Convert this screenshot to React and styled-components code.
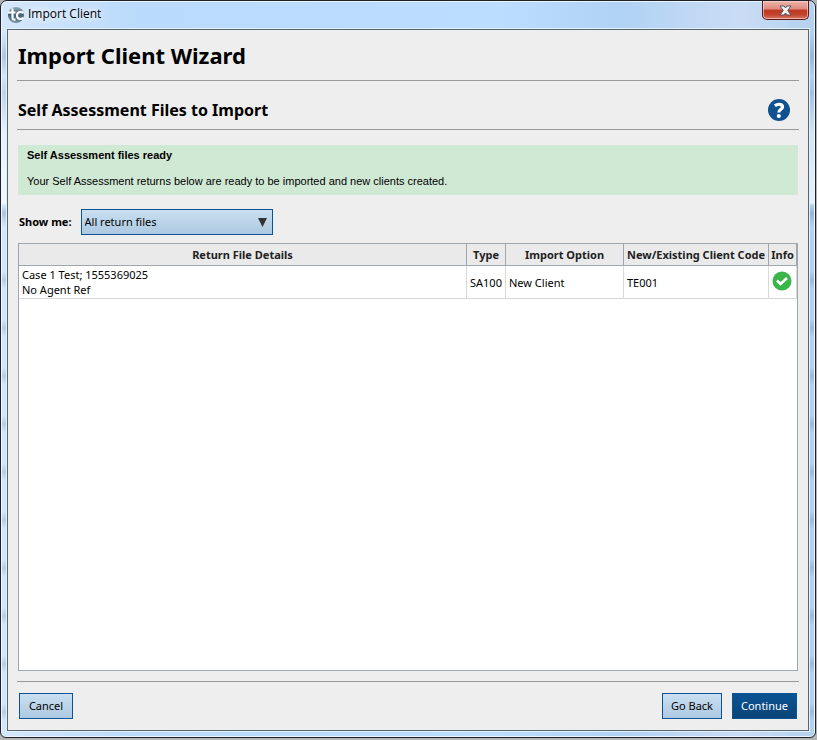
import React from 'react';
import styled, { createGlobalStyle } from 'styled-components';

const GlobalStyle = createGlobalStyle`
  * {
    box-sizing: border-box;
  }

  body {
    margin: 0;
    background: #b4b4b4;
    color: #000000;
    font-family: 'Noto Sans', 'Open Sans', sans-serif;
    font-size: 11px;
  }

  button,
  select {
    font: inherit;
    color: inherit;
    border-radius: 0;
    margin: 0;
  }
`;

const Page = styled.div`
  display: flex;
  min-height: 100vh;
  padding: 0 1px 2px 0;
`;

/* Aero glass frame round the dialog */
const WindowFrame = styled.div`
  flex: 1;
  min-width: 0;
  display: flex;
  flex-direction: column;
  padding: 0 6px 6px;
  border: 1px solid #20222b;
  border-radius: 7px 7px 6px 6px;
  background:
    linear-gradient(
      to bottom,
      transparent 0,
      transparent 32px,
      rgba(70, 100, 140, 0.25) 55px,
      transparent 75px,
      rgba(70, 100, 140, 0.15) 92px,
      rgba(255, 255, 255, 0.4) 130px,
      rgba(255, 255, 255, 0.7) 202px,
      transparent 204px
    ),
    linear-gradient(
      to bottom,
      transparent 204px,
      rgba(60, 90, 130, 0.25) 212px,
      transparent 225px,
      transparent 100%
    ),
    repeating-linear-gradient(
      to bottom,
      transparent 0,
      transparent 30px,
      rgba(60, 90, 130, 0.2) 39px,
      transparent 48px
    ) 0 240px no-repeat,
    linear-gradient(to right, #d5e7fb 0, #b9dafb 140px, #bbddff 500px, #b0d2f4 620px, #cadcf5 740px, #b3d1ee 100%);
  box-shadow: inset 0 0 0 1px #eaf5ff;
`;

const TitleBar = styled.header`
  display: flex;
  align-items: flex-start;
  justify-content: space-between;
  height: 28px;
`;

const TitleGroup = styled.div`
  display: flex;
  align-items: center;
  gap: 4px;
  height: 28px;
  padding-left: 1px;
`;

const WindowTitle = styled.span`
  font-family: 'Open Sans', 'Noto Sans', sans-serif;
  font-size: 12px;
  line-height: 16px;
  padding-bottom: 2px;
  text-shadow: 0 0 8px #ffffff, 0 0 8px #ffffff;
`;

const CloseButton = styled.button`
  display: flex;
  align-items: center;
  justify-content: center;
  width: 47px;
  height: 19px;
  padding: 0;
  border: 1px solid #5c1a1c;
  border-top: 0;
  border-radius: 0 0 5px 5px;
  background: linear-gradient(to bottom, #edb5ab 0, #de8a7e 45%, #bd3820 50%, #c2432b 75%, #d9786a 100%);
  box-shadow: inset 0 0 0 1px rgba(255, 220, 210, 0.6);
`;

const Panel = styled.main`
  flex: 1;
  display: flex;
  flex-direction: column;
  padding: 0 9px 11px;
  border: 1px solid #566570;
  background: #eeeeee;
  box-shadow: 0 0 0 1px #e1f0fb;
`;

const Divider = styled.hr`
  width: 100%;
  margin: 0;
  border: 0;
  border-top: 1px solid #999999;
`;

const PageTitle = styled.h1`
  margin: 0;
  padding: 10px 1px;
  font-size: 22px;
  line-height: 30px;
  font-weight: 700;
`;

const SectionHeader = styled.div`
  display: flex;
  align-items: center;
  justify-content: space-between;
  height: 48px;
  padding: 10px 9px 0 1px;
`;

const SectionTitle = styled.h2`
  margin: 0;
  font-size: 16px;
  line-height: 22px;
  font-weight: 700;
`;

const HelpButton = styled.button`
  display: flex;
  padding: 0;
  border: 0;
  background: none;
`;

const Body = styled.div`
  flex: 1;
  display: flex;
  flex-direction: column;
  padding: 15px 1px 10px;
`;

const Notice = styled.section`
  height: 50px;
  padding: 3px 9px;
  background: #d0e9d4;
  font-family: 'Liberation Sans', Arial, sans-serif;
  line-height: 14px;
`;

const NoticeTitle = styled.h3`
  margin: 0 0 12px;
  font-size: 11px;
  font-weight: 700;
`;

const NoticeText = styled.p`
  margin: 0;
`;

const FilterRow = styled.div`
  display: flex;
  align-items: center;
  gap: 9px;
  padding: 14px 0 8px 1px;
`;

const FilterLabel = styled.label`
  padding-bottom: 2px;
  font-weight: 700;
`;

const SelectBox = styled.div`
  position: relative;
  width: 192px;
`;

const Select = styled.select`
  display: block;
  width: 100%;
  height: 26px;
  padding: 0 24px 2px 3px;
  appearance: none;
  border: 1px solid #0b5394;
  background: linear-gradient(to bottom, #c9dff1, #adc9e1);
`;

const SelectArrow = styled.svg`
  position: absolute;
  top: 9px;
  right: 6px;
  pointer-events: none;
`;

const TableArea = styled.div`
  flex: 1;
  border: 1px solid #9ea7ad;
  background: #ffffff;
`;

const Table = styled.table`
  width: 100%;
  table-layout: fixed;
  border-collapse: separate;
  border-spacing: 0;
`;

const Column = styled.col`
  width: ${({ $width }) => $width || 'auto'};
`;

const HeadCell = styled.th`
  height: 22px;
  padding: 0;
  border-right: 1px solid #9ea7ad;
  border-bottom: 1px solid #9ea7ad;
  background: #eaeaea;
  color: #222222;
  line-height: 15px;
  white-space: nowrap;
`;

const Cell = styled.td`
  height: 33px;
  padding: 0 3px;
  border-right: 1px solid #d9d9d9;
  border-bottom: 1px solid #d9d9d9;
  line-height: 15px;
  white-space: nowrap;
`;

const StatusIcon = styled.svg`
  display: block;
  margin-bottom: 2px;
`;

const Footer = styled.footer`
  display: flex;
  gap: 10px;
  padding: 11px 2px 0;
`;

const Button = styled.button`
  min-width: 54px;
  height: 26px;
  padding: 0 8px 2px;
  border: 1px solid #0b5394;
  color: ${({ $primary }) => ($primary ? '#ffffff' : '#000000')};
  background: ${({ $primary }) =>
    $primary
      ? 'linear-gradient(to bottom, #0b5394, #0a4478)'
      : 'linear-gradient(to bottom, #c9dff1, #adc9e1)'};

  &:first-child {
    margin-right: auto;
  }
`;

const columns = [
  { label: 'Return File Details' },
  { label: 'Type', width: '39px' },
  { label: 'Import Option', width: '118px' },
  { label: 'New/Existing Client Code', width: '145px' },
  { label: 'Info', width: '28px' },
];

const returns = [
  {
    name: 'Case 1 Test; 1555369025',
    agent: 'No Agent Ref',
    type: 'SA100',
    option: 'New Client',
    code: 'TE001',
  },
];

function AppLogo() {
  return (
    <svg width="16" height="16" viewBox="0 0 16 16" aria-hidden="true">
      <defs>
        <linearGradient id="logo" x1="0" y1="0" x2="0" y2="1">
          <stop offset="0" stopColor="#92a9b5" />
          <stop offset="0.5" stopColor="#3f5f73" />
          <stop offset="1" stopColor="#7895a4" />
        </linearGradient>
      </defs>
      <circle cx="8" cy="8" r="8" fill="url(#logo)" />
      <path d="M4.500 1.500v9c0 2 1 2.500 3 2M0 5.500h7.500" fill="none" stroke="#fff" strokeWidth="2.200" />
      <path d="M15.500 6c-3-2-6.500-.8-6.500 2.500s3.500 4.500 6.500 2.500" fill="none" stroke="#fff" strokeWidth="2.200" />
    </svg>
  );
}

function CloseIcon() {
  return (
    <svg width="13" height="11" viewBox="0 0 13 11" aria-hidden="true">
      <path
        d="M1 1h4l1.500 2L8 1h4L8.700 5.500 12 10H8L6.500 8 5 10H1l3.300-4.500z"
        fill="#f6f6f6"
        stroke="#535666"
        strokeWidth="1"
      />
    </svg>
  );
}

function HelpIcon() {
  return (
    <svg width="22" height="22" viewBox="0 0 22 22" aria-hidden="true">
      <circle cx="11" cy="11" r="11" fill="#0f528f" />
      <path
        d="M6.800 6.700Q8.800 5.400 11 5.400C13.400 5.400 14.500 6.300 14.500 7.900C14.500 10.400 10.800 10.100 10.800 13.600"
        fill="none"
        stroke="#fff"
        strokeWidth="3.200"
      />
      <circle cx="10.800" cy="17" r="2.100" fill="#fff" />
    </svg>
  );
}

function App() {
  return (
    <>
      <GlobalStyle />
      <Page>
        <WindowFrame>
          <TitleBar>
            <TitleGroup>
              <AppLogo />
              <WindowTitle>Import Client</WindowTitle>
            </TitleGroup>
            <CloseButton type="button" aria-label="Close">
              <CloseIcon />
            </CloseButton>
          </TitleBar>

          <Panel>
            <PageTitle>Import Client Wizard</PageTitle>
            <Divider />
            <SectionHeader>
              <SectionTitle>Self Assessment Files to Import</SectionTitle>
              <HelpButton type="button" aria-label="Help">
                <HelpIcon />
              </HelpButton>
            </SectionHeader>
            <Divider />

            <Body>
              <Notice>
                <NoticeTitle>Self Assessment files ready</NoticeTitle>
                <NoticeText>
                  Your Self Assessment returns below are ready to be imported and new clients created.
                </NoticeText>
              </Notice>

              <FilterRow>
                <FilterLabel htmlFor="filter">Show me:</FilterLabel>
                <SelectBox>
                  <Select id="filter" defaultValue="all">
                    <option value="all">All return files</option>
                  </Select>
                  <SelectArrow width="9" height="9" viewBox="0 0 9 9" aria-hidden="true">
                    <path d="M0 0h9L4.500 9z" fill="#333333" />
                  </SelectArrow>
                </SelectBox>
              </FilterRow>

              <TableArea>
                <Table>
                  <colgroup>
                    {columns.map((column) => (
                      <Column key={column.label} $width={column.width} />
                    ))}
                  </colgroup>
                  <thead>
                    <tr>
                      {columns.map((column) => (
                        <HeadCell key={column.label} scope="col">
                          {column.label}
                        </HeadCell>
                      ))}
                    </tr>
                  </thead>
                  <tbody>
                    {returns.map((item) => (
                      <tr key={item.name}>
                        <Cell>
                          {item.name}
                          <br />
                          {item.agent}
                        </Cell>
                        <Cell>{item.type}</Cell>
                        <Cell>{item.option}</Cell>
                        <Cell>{item.code}</Cell>
                        <Cell>
                          <StatusIcon width="20" height="20" viewBox="0 0 20 20" role="img" aria-label="Ready">
                            <circle cx="10" cy="10" r="9.500" fill="#39b54a" />
                            <path d="M5 9.500l3.500 3.500 6.500-6" fill="none" stroke="#fff" strokeWidth="2.600" />
                          </StatusIcon>
                        </Cell>
                      </tr>
                    ))}
                  </tbody>
                </Table>
              </TableArea>
            </Body>

            <Divider />
            <Footer>
              <Button type="button">Cancel</Button>
              <Button type="button">Go Back</Button>
              <Button type="button" $primary>
                Continue
              </Button>
            </Footer>
          </Panel>
        </WindowFrame>
      </Page>
    </>
  );
}

export default App;
